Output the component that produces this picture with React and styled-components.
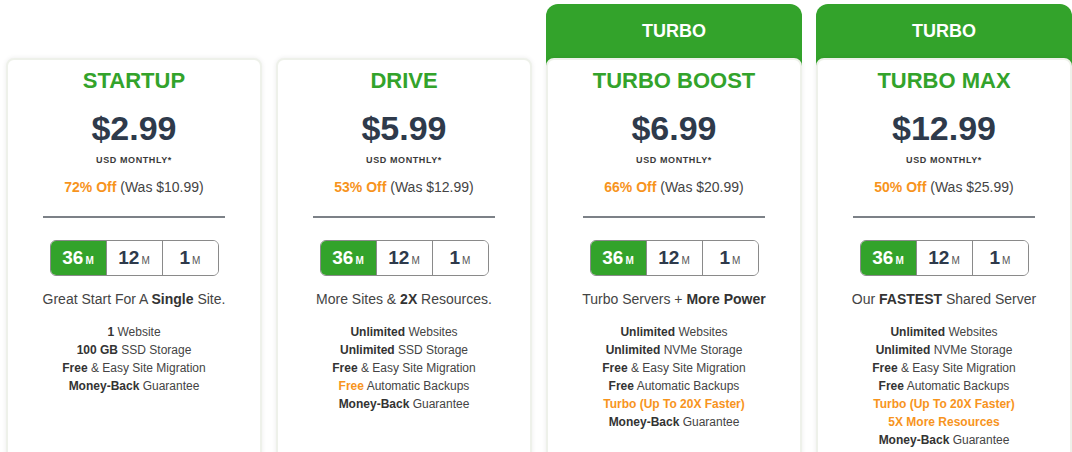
import styled, { createGlobalStyle } from "styled-components";

const GlobalStyle = createGlobalStyle`
  body {
    margin: 0;
    background: #fff;
    font-family: "Liberation Sans", Arial, sans-serif;
  }
`;

const GREEN = "#33a32b";
const ORANGE = "#f7941d";

const Row = styled.div`
  display: flex;
  gap: 14px;
  padding: 4px 0 0 6px;
  height: 448px;
  overflow: hidden;
  align-items: flex-start;
`;

const Column = styled.div`
  width: 256px;
  flex: none;
  display: flex;
  flex-direction: column;
  border-radius: 12px 12px 0 0;
  background: ${(p) => (p.$turbo ? GREEN : "transparent")};
`;

const Ribbon = styled.div`
  height: 54px;
  display: flex;
  align-items: center;
  justify-content: center;
  color: #fff;
  font-weight: 700;
  font-size: 18px;
`;

const Card = styled.div`
  background: #fff;
  border: 2px solid #eef1ea;
  border-radius: 8px 8px 0 0;
  box-shadow: 0 0 5px rgba(0, 0, 0, 0.08);
  min-height: 420px;
  display: flex;
  flex-direction: column;
  align-items: center;
  padding-top: 8px;
  text-align: center;
`;

const PlanName = styled.h2`
  margin: 0;
  font-size: 22px;
  line-height: 26px;
  font-weight: 700;
  color: ${GREEN};
`;

const Price = styled.div`
  margin-top: 15px;
  font-size: 34px;
  line-height: 38px;
  font-weight: 700;
  color: #2e3a4b;
`;

const Period = styled.div`
  margin-top: 7px;
  font-size: 9px;
  line-height: 12px;
  font-weight: 700;
  letter-spacing: 0.6px;
  color: #3a3a3a;
`;

const Discount = styled.div`
  margin-top: 12px;
  font-size: 14px;
  line-height: 18px;
  color: #444;
`;

const Hot = styled.span`
  color: ${ORANGE};
  font-weight: 700;
`;

const Divider = styled.hr`
  margin: 20px 0 0;
  width: 182px;
  border: none;
  height: 2px;
  background: #7c8187;
`;

const Terms = styled.div`
  margin-top: 22px;
  display: flex;
  border: 1px solid #8a8a8a;
  border-radius: 6px;
  overflow: hidden;
`;

const Term = styled.div`
  width: 55px;
  height: 34px;
  display: flex;
  align-items: center;
  justify-content: center;
  font-size: 19px;
  font-weight: 700;
  color: ${(p) => (p.$active ? "#fff" : "#2e3a4b")};
  background: ${(p) => (p.$active ? GREEN : "#fff")};
  & + & {
    border-left: 1px solid #8a8a8a;
  }
  small {
    font-size: 10px;
    font-weight: ${(p) => (p.$active ? 700 : 400)};
    margin: 5px 0 0 2px;
    color: ${(p) => (p.$active ? "#fff" : "#555")};
  }
`;

const Tagline = styled.div`
  margin-top: 14px;
  font-size: 14px;
  line-height: 18px;
  color: #444;
  b {
    color: #333;
  }
`;

const Features = styled.ul`
  list-style: none;
  margin: 15px 0 0;
  padding: 0;
  font-size: 12px;
  line-height: 18px;
  color: #444;
  b {
    color: #333;
  }
`;

const plans = [
  {
    name: "STARTUP",
    price: "2.99",
    off: "72% Off",
    was: "$10.99",
    tagline: (
      <>
        Great Start For A <b>Single</b> Site.
      </>
    ),
    features: [
      [<b key="a">1</b>, " Website"],
      [<b key="a">100 GB</b>, " SSD Storage"],
      [<b key="a">Free</b>, " & Easy Site Migration"],
      [<b key="a">Money-Back</b>, " Guarantee"],
    ],
  },
  {
    name: "DRIVE",
    price: "5.99",
    off: "53% Off",
    was: "$12.99",
    tagline: (
      <>
        More Sites & <b>2X</b> Resources.
      </>
    ),
    features: [
      [<b key="a">Unlimited</b>, " Websites"],
      [<b key="a">Unlimited</b>, " SSD Storage"],
      [<b key="a">Free</b>, " & Easy Site Migration"],
      [<Hot key="a">Free</Hot>, " Automatic Backups"],
      [<b key="a">Money-Back</b>, " Guarantee"],
    ],
  },
  {
    turbo: true,
    name: "TURBO BOOST",
    price: "6.99",
    off: "66% Off",
    was: "$20.99",
    tagline: (
      <>
        Turbo Servers + <b>More Power</b>
      </>
    ),
    features: [
      [<b key="a">Unlimited</b>, " Websites"],
      [<b key="a">Unlimited</b>, " NVMe Storage"],
      [<b key="a">Free</b>, " & Easy Site Migration"],
      [<b key="a">Free</b>, " Automatic Backups"],
      [<Hot key="a">Turbo (Up To 20X Faster)</Hot>],
      [<b key="a">Money-Back</b>, " Guarantee"],
    ],
  },
  {
    turbo: true,
    name: "TURBO MAX",
    price: "12.99",
    off: "50% Off",
    was: "$25.99",
    tagline: (
      <>
        Our <b>FASTEST</b> Shared Server
      </>
    ),
    features: [
      [<b key="a">Unlimited</b>, " Websites"],
      [<b key="a">Unlimited</b>, " NVMe Storage"],
      [<b key="a">Free</b>, " & Easy Site Migration"],
      [<b key="a">Free</b>, " Automatic Backups"],
      [<Hot key="a">Turbo (Up To 20X Faster)</Hot>],
      [<Hot key="a">5X More Resources</Hot>],
      [<b key="a">Money-Back</b>, " Guarantee"],
    ],
  },
];

const terms = ["36", "12", "1"];

export default function App() {
  return (
    <>
      <GlobalStyle />
      <Row>
        {plans.map((p) => (
          <Column key={p.name} $turbo={p.turbo}>
            <Ribbon>{p.turbo ? "TURBO" : ""}</Ribbon>
            <Card>
              <PlanName>{p.name}</PlanName>
              <Price>${p.price}</Price>
              <Period>USD MONTHLY*</Period>
              <Discount>
                <Hot>{p.off}</Hot> (Was {p.was})
              </Discount>
              <Divider />
              <Terms>
                {terms.map((t, i) => (
                  <Term key={t} $active={i === 0}>
                    {t}
                    <small>M</small>
                  </Term>
                ))}
              </Terms>
              <Tagline>{p.tagline}</Tagline>
              <Features>
                {p.features.map((f, i) => (
                  <li key={i}>{f}</li>
                ))}
              </Features>
            </Card>
          </Column>
        ))}
      </Row>
    </>
  );
}
